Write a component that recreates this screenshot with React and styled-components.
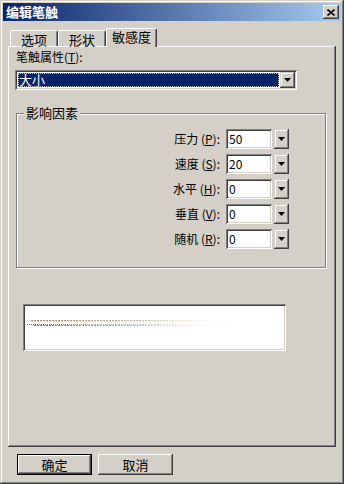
import styled, { createGlobalStyle } from "styled-components";

const GlobalStyle = createGlobalStyle`
  html, body {
    margin: 0;
    padding: 0;
    background: #d4d0c8;
  }
  * {
    box-sizing: border-box;
  }
`;

const FONT = `"Noto Sans CJK SC", "Liberation Sans", sans-serif`;

const factors = [
  { name: "压力", key: "P", value: "50" },
  { name: "速度", key: "S", value: "20" },
  { name: "水平", key: "H", value: "0" },
  { name: "垂直", key: "V", value: "0" },
  { name: "随机", key: "R", value: "0" },
];

const tabs = [
  { label: "选项", width: 48 },
  { label: "形状", width: 48 },
  { label: "敏感度", width: 51, active: true },
];

function Arrow() {
  return (
    <svg width="7" height="4" viewBox="0 0 7 4">
      <polygon points="0,0 7,0 3.5,4" fill="#000" />
    </svg>
  );
}

function CloseGlyph() {
  return (
    <svg width="8" height="7" viewBox="0 0 8 7">
      <path d="M0.5 0.5 L7.5 6.5 M7.5 0.5 L0.5 6.5" stroke="#000" strokeWidth="1.6" />
    </svg>
  );
}

// faint brush stroke shown in the preview box
function StrokePreview() {
  return (
    <svg width="259" height="43" viewBox="0 0 259 43">
      <defs>
        <linearGradient id="fadeA" gradientUnits="userSpaceOnUse" x1="4" x2="212" y1="0" y2="0">
          <stop offset="0" stopColor="#a88058" />
          <stop offset="0.55" stopColor="#c0a080" stopOpacity="0.7" />
          <stop offset="1" stopColor="#e8dccc" stopOpacity="0" />
        </linearGradient>
        <linearGradient id="fadeB" gradientUnits="userSpaceOnUse" x1="2" x2="190" y1="0" y2="0">
          <stop offset="0" stopColor="#5a6890" />
          <stop offset="0.55" stopColor="#8088a8" stopOpacity="0.6" />
          <stop offset="1" stopColor="#c8ccd8" stopOpacity="0" />
        </linearGradient>
      </defs>
      <line x1="6" y1="14.5" x2="208" y2="14.5" stroke="url(#fadeA)" strokeWidth="1" strokeDasharray="2 1" />
      <line x1="7" y1="15.5" x2="180" y2="15.5" stroke="url(#fadeA)" strokeWidth="1" strokeDasharray="1 2" opacity="0.6" />
      <line x1="2" y1="18.5" x2="188" y2="18.5" stroke="url(#fadeB)" strokeWidth="1" strokeDasharray="1 1" />
      <line x1="9" y1="19.5" x2="188" y2="19.5" stroke="url(#fadeB)" strokeWidth="1" strokeDasharray="2 1" />
    </svg>
  );
}

export default function App() {
  return (
    <>
      <GlobalStyle />
      <Window>
        <TitleBar>
          <Title>编辑笔触</Title>
          <CloseButton>
            <CloseGlyph />
          </CloseButton>
        </TitleBar>

        <TabStrip>
          {tabs.map((t) => (
            <Tab key={t.label} $active={t.active} style={{ width: t.width }}>
              {t.label}
            </Tab>
          ))}
        </TabStrip>

        <Panel>
          <FieldLabel>
            笔触属性(<u>T</u>):
          </FieldLabel>
          <Select>
            <Selected>
              <span>大小</span>
            </Selected>
            <DropButton>
              <Arrow />
            </DropButton>
          </Select>

          <Group>
            <Legend>影响因素</Legend>
            {factors.map((f) => (
              <Row key={f.key}>
                <RowLabel>
                  {f.name} (<u>{f.key}</u>):
                </RowLabel>
                <Edit>{f.value}</Edit>
                <SpinButton>
                  <Arrow />
                </SpinButton>
              </Row>
            ))}
          </Group>

          <Preview>
            <StrokePreview />
          </Preview>
        </Panel>

        <ButtonRow>
          <Button $default>确定</Button>
          <Button>取消</Button>
        </ButtonRow>
      </Window>
    </>
  );
}

const Window = styled.div`
  width: 344px;
  height: 484px;
  padding: 3px;
  display: flex;
  flex-direction: column;
  background: #d4d0c8;
  box-shadow: inset -1px -1px 0 #404040, inset 1px 1px 0 #d4d0c8,
    inset -2px -2px 0 #808080, inset 2px 2px 0 #ffffff;
  font-family: ${FONT};
  font-size: 12px;
  color: #000;
`;

const TitleBar = styled.div`
  height: 18px;
  display: flex;
  align-items: center;
  justify-content: space-between;
  padding: 0 2px 0 3px;
  background: linear-gradient(to right, #0a246a, #a6caf0);
`;

const Title = styled.span`
  color: #fff;
  font-weight: bold;
  font-size: 13px;
  line-height: 14px;
`;

const CloseButton = styled.div`
  width: 16px;
  height: 14px;
  display: flex;
  align-items: center;
  justify-content: center;
  background: #d4d0c8;
  box-shadow: inset -1px -1px 0 #404040, inset 1px 1px 0 #ffffff,
    inset -2px -2px 0 #808080;
`;

const TabStrip = styled.div`
  height: 18px;
  margin: 7px 5px 0 5px;
  padding-left: 2px;
  display: flex;
  align-items: flex-end;
  position: relative;
  z-index: 1;
`;

const Tab = styled.div`
  height: ${(p) => (p.$active ? "19px" : "16px")};
  margin-bottom: ${(p) => (p.$active ? "-1px" : "0")};
  padding-top: ${(p) => (p.$active ? "1px" : "2px")};
  text-align: center;
  font-size: 13px;
  line-height: 14px;
  background: #d4d0c8;
  border-top: 1px solid #fff;
  border-left: 1px solid #fff;
  border-right: 1px solid #404040;
  box-shadow: inset -1px 0 0 #808080;
  border-radius: 2px 2px 0 0;
`;

const Panel = styled.div`
  flex: 1;
  margin: 0 5px;
  padding: 2px 7px 0 7px;
  display: flex;
  flex-direction: column;
  align-items: flex-start;
  box-shadow: inset -1px -1px 0 #404040, inset 1px 1px 0 #ffffff,
    inset -2px -2px 0 #808080;
`;

const FieldLabel = styled.div`
  margin: 2px 0 0 1px;
  line-height: 14px;

  u {
    text-decoration-thickness: 1px;
    text-underline-offset: 1px;
  }
`;

const Select = styled.div`
  width: 282px;
  height: 20px;
  margin-top: 6px;
  padding: 2px 2px 2px 3px;
  display: flex;
  background: #fff;
  box-shadow: inset 1px 1px 0 #808080, inset -1px -1px 0 #ffffff,
    inset 2px 2px 0 #404040, inset -2px -2px 0 #d4d0c8;
`;

const Selected = styled.div`
  flex: 1;
  margin: 1px 1px 1px 0;
  padding-left: 1px;
  background: #0a246a;
  color: #fff;
  font-size: 13px;
  line-height: 14px;
  outline: 1px dotted #c0c0c0;
  outline-offset: -1px;
`;

const DropButton = styled.div`
  width: 15px;
  height: 16px;
  display: flex;
  align-items: center;
  justify-content: center;
  background: #d4d0c8;
  box-shadow: inset -1px -1px 0 #404040, inset 1px 1px 0 #d4d0c8,
    inset -2px -2px 0 #808080, inset 2px 2px 0 #ffffff;
`;

const Group = styled.div`
  position: relative;
  width: 310px;
  margin: 23px 0 0 1px;
  padding: 15px 36px 18px 0;
  display: flex;
  flex-direction: column;
  align-items: flex-end;
  gap: 5px;
  border: 1px solid #808080;
  box-shadow: inset 1px 1px 0 #fff, 1px 1px 0 #fff;
`;

const Legend = styled.span`
  position: absolute;
  top: -8px;
  left: 7px;
  padding: 0 2px;
  font-size: 13px;
  line-height: 14px;
  background: #d4d0c8;
`;

const Row = styled.div`
  height: 20px;
  display: flex;
  align-items: center;
`;

const RowLabel = styled.span`
  margin-right: 6px;
  line-height: 14px;
`;

const Edit = styled.div`
  width: 46px;
  height: 20px;
  padding: 3px 0 0 3px;
  line-height: 14px;
  background: #fff;
  box-shadow: inset 1px 1px 0 #808080, inset -1px -1px 0 #ffffff,
    inset 2px 2px 0 #404040, inset -2px -2px 0 #d4d0c8;
`;

const SpinButton = styled(DropButton)`
  height: 20px;
  margin-left: 2px;
`;

const Preview = styled.div`
  width: 263px;
  height: 47px;
  margin: 36px 0 0 8px;
  padding: 2px;
  background: #fff;
  box-shadow: inset 1px 1px 0 #808080, inset -1px -1px 0 #ffffff,
    inset 2px 2px 0 #404040, inset -2px -2px 0 #d4d0c8;

  svg {
    display: block;
  }
`;

const ButtonRow = styled.div`
  height: 21px;
  margin: 7px 0 6px 14px;
  display: flex;
  gap: 6px;
`;

const Button = styled.div`
  width: 75px;
  height: 21px;
  display: flex;
  align-items: center;
  justify-content: center;
  font-size: 13px;
  line-height: 14px;
  background: #d4d0c8;
  border: ${(p) => (p.$default ? "1px solid #000" : "0")};
  box-shadow: inset -1px -1px 0 #404040, inset 1px 1px 0 #ffffff,
    inset -2px -2px 0 #808080;
`;
